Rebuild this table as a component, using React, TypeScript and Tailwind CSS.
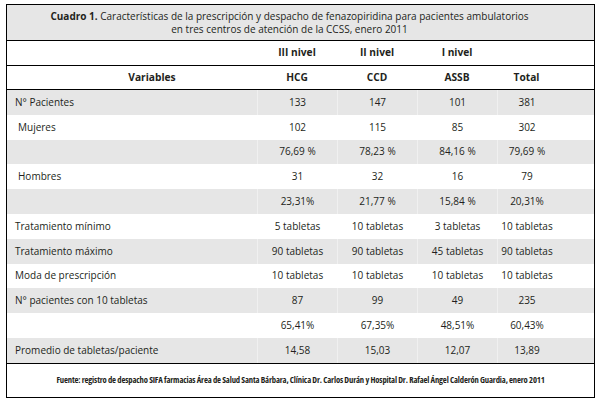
import React from "react";

const rows: { label: string; vals: string[]; indent?: boolean }[] = [
  { label: "N° Pacientes", vals: ["133", "147", "101", "381"] },
  { label: "Mujeres", vals: ["102", "115", "85", "302"], indent: true },
  { label: "", vals: ["76,69 %", "78,23 %", "84,16 %", "79,69 %"] },
  { label: "Hombres", vals: ["31", "32", "16", "79"], indent: true },
  { label: "", vals: ["23,31%", "21,77 %", "15,84 %", "20,31%"] },
  { label: "Tratamiento mínimo", vals: ["5 tabletas", "10 tabletas", "3 tabletas", "10 tabletas"] },
  { label: "Tratamiento máximo", vals: ["90 tabletas", "90 tabletas", "45 tabletas", "90 tabletas"] },
  { label: "Moda de prescripción", vals: ["10 tabletas", "10 tabletas", "10 tabletas", "10 tabletas"] },
  { label: "N° pacientes con 10 tabletas", vals: ["87", "99", "49", "235"] },
  { label: "", vals: ["65,41%", "67,35%", "48,51%", "60,43%"] },
  { label: "Promedio de tabletas/paciente", vals: ["14,58", "15,03", "12,07", "13,89"] },
];

const cols = "grid grid-cols-[250px_80px_80px_80px_1fr]";

export default function App() {
  return (
    <div
      className="w-[601px] h-[406px] bg-white pt-[4px] pl-[6px] text-[#231f20]"
      style={{ fontFamily: '"Open Sans", "Noto Sans", sans-serif' }}
    >
      <div className="w-[589px] border border-black">
        <div className="h-[36px] bg-[#e6e6e6] border-b border-black flex flex-col items-center justify-center pr-[22px] text-[10px] leading-[13px]">
          <div>
            <span className="font-bold">Cuadro 1.</span> Características de la prescripción y despacho de fenazopiridina para pacientes ambulatorios
          </div>
          <div>en tres centros de atención de la CCSS, enero 2011</div>
        </div>
        <div className={`${cols} h-[25px] border-b border-black items-center text-[10.2px] font-bold`}>
          <div />
          <div className="text-center">III nivel</div>
          <div className="text-center">II nivel</div>
          <div className="text-center">I nivel</div>
          <div />
        </div>
        <div className={`${cols} h-[24px] border-b border-black items-center text-[10.2px] font-bold`}>
          <div className="text-center pl-[40px]">Variables</div>
          <div className="text-center">HCG</div>
          <div className="text-center">CCD</div>
          <div className="text-center">ASSB</div>
          <div className="text-center pr-[38px]">Total</div>
        </div>
        <div className="border-b border-black">
          {rows.map((r, i) => (
            <div
              key={i}
              className={`${cols} h-[24.8px] items-center text-[10px] ${i % 2 === 0 ? "bg-[#e6e6e6]" : "bg-white"}`}
            >
              <div className={r.indent ? "pl-[11px]" : "pl-[8px]"}>{r.label}</div>
              {r.vals.map((v, j) => (
                <div
                  key={j}
                  className={`h-full flex items-center justify-center border-l border-white/40 ${j === 3 ? "pr-[38px]" : ""}`}
                >
                  {v}
                </div>
              ))}
            </div>
          ))}
        </div>
        <div className="h-[33px] flex items-center justify-center">
          <span className="text-[8.6px] font-bold tracking-[-0.15px] [font-stretch:75%]">
            Fuente: registro de despacho SIFA farmacias Área de Salud Santa Bárbara, Clínica Dr. Carlos Durán y Hospital Dr. Rafael Ángel Calderón Guardia, enero 2011
          </span>
        </div>
      </div>
    </div>
  );
}
